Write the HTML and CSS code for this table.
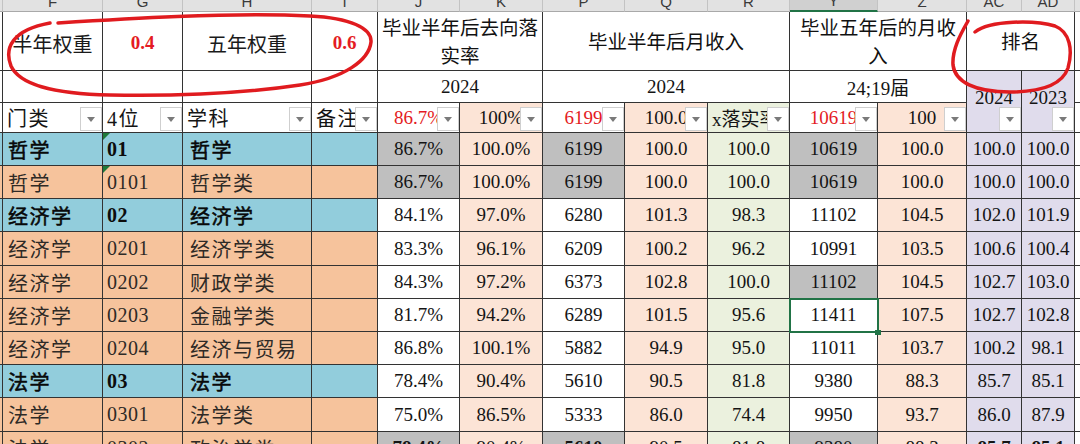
FILE: index.html
```html
<!DOCTYPE html>
<html lang="zh">
<head>
<meta charset="utf-8">
<title>Sheet</title>
<link rel="stylesheet" href="styles.css">
</head>
<body>
<div class="page">
<div class="sheet">
  <!-- column letters -->
  <div class="hd"></div>
  <div class="hd"><span>F</span></div>
  <div class="hd"><span>G</span></div>
  <div class="hd"><span>H</span></div>
  <div class="hd"><span>I</span></div>
  <div class="hd"><span>J</span></div>
  <div class="hd"><span>K</span></div>
  <div class="hd"><span>P</span></div>
  <div class="hd"><span>Q</span></div>
  <div class="hd"><span>R</span></div>
  <div class="hd hsel"><span>Y</span></div>
  <div class="hd"><span>Z</span></div>
  <div class="hd"><span>AC</span></div>
  <div class="hd"><span>AD</span></div>
  <div class="hd"></div>

  <!-- row 1 -->
  <div class="c"></div>
  <div class="c wt r1">半年权重</div>
  <div class="c red bd r1">0.4</div>
  <div class="c wt r1">五年权重</div>
  <div class="c red bd r1">0.6</div>
  <div class="c ttl s2">毕业半年后去向落<br>实率</div>
  <div class="c ttl s3">毕业半年后月收入</div>
  <div class="c ttl s2">毕业五年后的月收<br>入</div>
  <div class="c ttl s2">排名</div>
  <div class="c"></div>

  <!-- row 2 -->
  <div class="c"></div>
  <div class="c"></div>
  <div class="c"></div>
  <div class="c"></div>
  <div class="c"></div>
  <div class="c s2">2024</div>
  <div class="c s3">2024</div>
  <div class="c s2">24;19届</div>
  <div class="c lv r2 yr">2024<span class="dd"></span></div>
  <div class="c lv r2 yr">2023<span class="dd"></span></div>
  <div class="c"></div>

  <!-- row 3: filters -->
  <div class="c"></div>
  <div class="c l2 cj">门类<span class="dd"></span></div>
  <div class="c l2 cj">4位<span class="dd"></span></div>
  <div class="c l2 cj">学科<span class="dd"></span></div>
  <div class="c l2 cj">备注<span class="dd"></span></div>
  <div class="c red">86.7%<span class="dd"></span></div>
  <div class="c pe">100%<span class="dd"></span></div>
  <div class="c red">6199<span class="dd"></span></div>
  <div class="c pe">100.0<span class="dd"></span></div>
  <div class="c gr l2">x落实率<span class="dd"></span></div>
  <div class="c red">10619<span class="dd"></span></div>
  <div class="c pe">100<span class="dd"></span></div>
  <div class="c"></div>

  <!-- 哲学 01 -->
  <div class="c bl"></div>
  <div class="c bl f cj md">哲学</div>
  <div class="c bl g bd tri">01</div>
  <div class="c bl h cj md">哲学</div>
  <div class="c bl"></div>
  <div class="c gy">86.7%</div>
  <div class="c pe">100.0%</div>
  <div class="c gy">6199</div>
  <div class="c pe">100.0</div>
  <div class="c gr">100.0</div>
  <div class="c gy">10619</div>
  <div class="c pe">100.0</div>
  <div class="c lv">100.0</div>
  <div class="c lv">100.0</div>
  <div class="c"></div>

  <!-- 哲学 0101 -->
  <div class="c or"></div>
  <div class="c or f cj">哲学</div>
  <div class="c or g tri">0101</div>
  <div class="c or h cj">哲学类</div>
  <div class="c or"></div>
  <div class="c gy">86.7%</div>
  <div class="c pe">100.0%</div>
  <div class="c gy">6199</div>
  <div class="c pe">100.0</div>
  <div class="c gr">100.0</div>
  <div class="c gy">10619</div>
  <div class="c pe">100.0</div>
  <div class="c lv">100.0</div>
  <div class="c lv">100.0</div>
  <div class="c"></div>

  <!-- 经济学 02 -->
  <div class="c bl"></div>
  <div class="c bl f cj md">经济学</div>
  <div class="c bl g bd">02</div>
  <div class="c bl h cj md">经济学</div>
  <div class="c bl"></div>
  <div class="c">84.1%</div>
  <div class="c pe">97.0%</div>
  <div class="c">6280</div>
  <div class="c pe">101.3</div>
  <div class="c gr">98.3</div>
  <div class="c">11102</div>
  <div class="c pe">104.5</div>
  <div class="c lv">102.0</div>
  <div class="c lv">101.9</div>
  <div class="c"></div>

  <!-- 0201 -->
  <div class="c or"></div>
  <div class="c or f cj">经济学</div>
  <div class="c or g">0201</div>
  <div class="c or h cj">经济学类</div>
  <div class="c or"></div>
  <div class="c">83.3%</div>
  <div class="c pe">96.1%</div>
  <div class="c">6209</div>
  <div class="c pe">100.2</div>
  <div class="c gr">96.2</div>
  <div class="c">10991</div>
  <div class="c pe">103.5</div>
  <div class="c lv">100.6</div>
  <div class="c lv">100.4</div>
  <div class="c"></div>

  <!-- 0202 -->
  <div class="c or"></div>
  <div class="c or f cj">经济学</div>
  <div class="c or g">0202</div>
  <div class="c or h cj">财政学类</div>
  <div class="c or"></div>
  <div class="c">84.3%</div>
  <div class="c pe">97.2%</div>
  <div class="c">6373</div>
  <div class="c pe">102.8</div>
  <div class="c gr">100.0</div>
  <div class="c gy">11102</div>
  <div class="c pe">104.5</div>
  <div class="c lv">102.7</div>
  <div class="c lv">103.0</div>
  <div class="c"></div>

  <!-- 0203 -->
  <div class="c or"></div>
  <div class="c or f cj">经济学</div>
  <div class="c or g">0203</div>
  <div class="c or h cj">金融学类</div>
  <div class="c or"></div>
  <div class="c">81.7%</div>
  <div class="c pe">94.2%</div>
  <div class="c">6289</div>
  <div class="c pe">101.5</div>
  <div class="c gr">95.6</div>
  <div class="c sel">11411</div>
  <div class="c pe">107.5</div>
  <div class="c lv">102.7</div>
  <div class="c lv">102.8</div>
  <div class="c"></div>

  <!-- 0204 -->
  <div class="c or"></div>
  <div class="c or f cj">经济学</div>
  <div class="c or g">0204</div>
  <div class="c or h cj">经济与贸易</div>
  <div class="c or"></div>
  <div class="c">86.8%</div>
  <div class="c pe">100.1%</div>
  <div class="c">5882</div>
  <div class="c pe">94.9</div>
  <div class="c gr">95.0</div>
  <div class="c">11011</div>
  <div class="c pe">103.7</div>
  <div class="c lv">100.2</div>
  <div class="c lv">98.1</div>
  <div class="c"></div>

  <!-- 法学 03 -->
  <div class="c bl"></div>
  <div class="c bl f cj md">法学</div>
  <div class="c bl g bd">03</div>
  <div class="c bl h cj md">法学</div>
  <div class="c bl"></div>
  <div class="c">78.4%</div>
  <div class="c pe">90.4%</div>
  <div class="c">5610</div>
  <div class="c pe">90.5</div>
  <div class="c gr">81.8</div>
  <div class="c">9380</div>
  <div class="c pe">88.3</div>
  <div class="c lv">85.7</div>
  <div class="c lv">85.1</div>
  <div class="c"></div>

  <!-- 0301 -->
  <div class="c or"></div>
  <div class="c or f cj">法学</div>
  <div class="c or g">0301</div>
  <div class="c or h cj">法学类</div>
  <div class="c or"></div>
  <div class="c">75.0%</div>
  <div class="c pe">86.5%</div>
  <div class="c">5333</div>
  <div class="c pe">86.0</div>
  <div class="c gr">74.4</div>
  <div class="c">9950</div>
  <div class="c pe">93.7</div>
  <div class="c lv">86.0</div>
  <div class="c lv">87.9</div>
  <div class="c"></div>

  <!-- 0302 -->
  <div class="c or"></div>
  <div class="c or f cj">法学</div>
  <div class="c or g">0302</div>
  <div class="c or h cj">政治学类</div>
  <div class="c or"></div>
  <div class="c gy bd">78.4%</div>
  <div class="c pe">90.4%</div>
  <div class="c gy bd">5610</div>
  <div class="c pe">90.5</div>
  <div class="c gr">81.8</div>
  <div class="c gy">9380</div>
  <div class="c pe">88.3</div>
  <div class="c lv bd">85.7</div>
  <div class="c lv bd">85.1</div>
  <div class="c"></div>
</div>

<svg class="ink" width="1080" height="444" viewBox="0 0 1080 444" aria-hidden="true">
  <path d="M58 23 C120 19 230 12 310 16 C350 18 372 28 371 42 C369 60 345 78 300 85 C240 94 170 96 110 95 C60 94 20 86 11 66 C4 48 12 30 50 23"/>
  <path d="M968 21 C960 35 952 50 953 65 C955 82 975 92 1010 92 C1040 92 1062 85 1068 68 C1073 50 1070 32 1055 26 C1035 20 990 20 975 32"/>
</svg>
</div>
</body>
</html>
```

FILE: styles.css
```css
html, body {
  margin: 0;
  padding: 0;
  background: #ffffff;
  overflow: hidden;
}

body {
  width: 1080px;
  height: 444px;
  font-family: "Liberation Serif", "Noto Sans CJK SC", serif;
}

.page {
  position: relative;
  width: 1080px;
  height: 444px;
  overflow: hidden;
}

.sheet {
  display: grid;
  grid-template-columns: 3px 100px 80px 129px 66px 82px 83px 82px 83px 82px 88px 89px 55px 53px 40px;
  grid-template-rows: 12px 59px 32px 30px 33px 33px 33px 34px 33px 33px 33px 33px 34px 33px;
  width: 1115px;
}

/* column letter header */
.hd {
  background: #e2e2e2;
  border-right: 1px solid #c3c3c3;
  border-bottom: 1px solid #a9a9a9;
  display: flex;
  justify-content: center;
  align-items: flex-end;
  overflow: hidden;
  font-family: "Liberation Sans", sans-serif;
  font-size: 15px;
  color: #3a3a3a;
}

.hd span {
  line-height: 15px;
  margin-bottom: 2px;
}

.hsel {
  background: #d0d0d0;
  border-bottom: 2px solid #217346;
}

/* cells */
.c {
  border-right: 1px solid #333333;
  border-bottom: 1px solid #333333;
  display: flex;
  align-items: center;
  justify-content: center;
  overflow: hidden;
  white-space: nowrap;
  position: relative;
  font-size: 19px;
  color: #141414;
  background: #ffffff;
}

.s2 { grid-column: span 2; }
.s3 { grid-column: span 3; }
.r2 { grid-row: span 2; }

.r1 { padding-top: 4px; }

.ttl {
  font-family: "Noto Sans CJK SC", sans-serif;
  font-size: 19.5px;
  line-height: 28px;
  text-align: center;
  white-space: normal;
  color: #111111;
}

.wt {
  font-family: "Noto Sans CJK SC", sans-serif;
  font-size: 20px;
  color: #1a1a1a;
}

.red { color: #e41b23; }
.bd { font-weight: bold; }
.md {
  font-weight: 400;
  color: #000000;
  -webkit-text-stroke: 0.5px #000000;
}

.yr {
  align-items: flex-start;
  padding-top: 16px;
}

.cj {
  font-size: 20px;
  letter-spacing: 1.5px;
}

.l2 {
  justify-content: flex-start;
  padding-left: 4px;
}

.f {
  justify-content: flex-start;
  padding-left: 5px;
}

.g {
  justify-content: flex-start;
  padding-left: 4px;
  font-size: 20px;
  letter-spacing: 0.5px;
}

.h {
  justify-content: flex-start;
  padding-left: 7px;
}

/* fills */
.bl { background: #92cddc; color: #0c0c0c; }
.or { background: #f6c39c; color: #2e2a26; }
.gy { background: #bfbfbf; }
.pe { background: #fce4d6; }
.gr { background: #ebf1de; }
.lv { background: #e0dcec; }

/* filter dropdown button */
.dd {
  position: absolute;
  right: 0;
  bottom: 1px;
  width: 22px;
  height: 24px;
  box-sizing: border-box;
  background: #ffffff;
  border: 1px solid #cfcfcf;
}

.dd::after {
  content: "";
  position: absolute;
  left: 6px;
  top: 9px;
  border-left: 4px solid transparent;
  border-right: 4px solid transparent;
  border-top: 5px solid #7a7a7a;
}

/* "number stored as text" marker */
.tri::before {
  content: "";
  position: absolute;
  left: 0;
  top: 0;
  border-top: 7px solid #1f7a3a;
  border-right: 7px solid transparent;
}

/* active cell */
.sel {
  overflow: visible;
  z-index: 2;
}

.sel::after {
  content: "";
  position: absolute;
  left: -1px;
  top: -1px;
  right: -2px;
  bottom: -2px;
  border: 2px solid #217346;
}

.sel::before {
  content: "";
  position: absolute;
  right: -4px;
  bottom: -4px;
  width: 6px;
  height: 5px;
  background: #217346;
  z-index: 3;
}

/* red hand-drawn circles */
.ink {
  position: absolute;
  left: 0;
  top: 0;
  pointer-events: none;
  z-index: 5;
}

.ink path {
  fill: none;
  stroke: #e01b1f;
  stroke-width: 3.5;
  stroke-linecap: round;
  stroke-linejoin: round;
}
```
